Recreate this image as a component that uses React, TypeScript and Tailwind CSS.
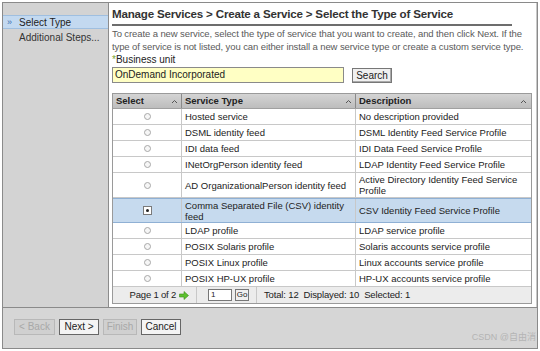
import React from "react";

const rows: { type: string; desc: string; tall?: boolean; selected?: boolean }[] = [
  { type: "Hosted service", desc: "No description provided" },
  { type: "DSML identity feed", desc: "DSML Identity Feed Service Profile" },
  { type: "IDI data feed", desc: "IDI Data Feed Service Profile" },
  { type: "INetOrgPerson identity feed", desc: "LDAP Identity Feed Service Profile" },
  { type: "AD OrganizationalPerson identity feed", desc: "Active Directory Identity Feed Service Profile", tall: true },
  { type: "Comma Separated File (CSV) identity feed", desc: "CSV Identity Feed Service Profile", tall: true, selected: true },
  { type: "LDAP profile", desc: "LDAP service profile" },
  { type: "POSIX Solaris profile", desc: "Solaris accounts service profile" },
  { type: "POSIX Linux profile", desc: "Linux accounts service profile" },
  { type: "POSIX HP-UX profile", desc: "HP-UX accounts service profile" },
];

function SortCaret() {
  return (
    <svg width="7" height="5" viewBox="0 0 7 5" className="shrink-0">
      <path d="M1 4 L3.5 1.5 L6 4" stroke="#555" strokeWidth="1" fill="none" />
    </svg>
  );
}

function Radio({ checked }: { checked?: boolean }) {
  if (checked) {
    return (
      <div className="w-[9px] h-[9px] border border-[#7a7a7a] bg-white flex items-center justify-center">
        <div className="w-[3px] h-[3px] bg-[#222] rounded-full" />
      </div>
    );
  }
  return <div className="w-[7px] h-[7px] rounded-full border border-[#a8a8a8] bg-[#f6f6f6]" />;
}

export default function App() {
  return (
    <div
      className="w-[540px] h-[351px] bg-white p-[2px] text-[#222]"
      style={{ fontFamily: '"Liberation Sans", Arial, sans-serif' }}
    >
      <div className="w-full h-full border border-[#8a8a8a] flex flex-col">
        <div className="flex h-[304px]">
          {/* Sidebar */}
          <div className="w-[106px] bg-[#d3d3d3] border-r border-[#8c8c8c] pt-[12px] text-[10px]">
            <div className="h-[14px] bg-[#c3d9f0] border-y border-[#9fbfe0] flex items-center pl-[4px]">
              <span className="text-[#3a6fb0] text-[9px] w-[12px] leading-none">»</span>
              <span className="text-[#222]">Select Type</span>
            </div>
            <div className="pl-[16px] mt-[1px] text-[#333]">Additional Steps...</div>
          </div>
          {/* Main */}
          <div className="flex-1 bg-white px-[3px] pt-[2px] border-r border-[#c8c8c8]">
            <div className="text-[11.6px] font-bold text-[#333] leading-[18px] tracking-[-0.2px]">
              Manage Services &gt; Create a Service &gt; Select the Type of Service
            </div>
            <div className="h-[2px] bg-[#6d6d6d] w-[400px] mt-[1px]" />
            <div className="text-[9.5px] text-[#5a5a5a] leading-[12.5px] mt-[2px] tracking-[-0.1px]">
              To create a new service, select the type of service that you want to create, and then click Next. If the
              type of service is not listed, you can either install a new service type or create a custom service type.
            </div>
            <div className="text-[10px] leading-[12px] mt-[1px] text-[#222]">
              <span className="text-[#7aa530]">*</span>Business unit
            </div>
            <div className="flex items-center mt-[1px]">
              <div className="w-[232px] h-[16px] bg-[#ffffc4] border border-[#8a8a8a] text-[10px] leading-[14px] pl-[2px]">
                OnDemand Incorporated
              </div>
              <div className="ml-[8px] w-[40px] h-[15px] bg-[#f0f0f0] border border-[#777] text-[10px] leading-[13px] text-center shadow-[inset_-1px_-1px_0_#aaa]">
                Search
              </div>
            </div>
            {/* Table */}
            <div className="mt-[10px] w-[420px] border border-[#9a9a9a] text-[9.5px]">
              <div className="flex h-[15px] bg-gradient-to-b from-[#d4d4d4] to-[#bdbdbd] font-bold text-[#222] border-b border-[#a0a0a0]">
                <div className="w-[69px] flex items-center justify-between pl-[3px] pr-[3px] border-r border-[#8a8a8a]">
                  <span>Select</span>
                  <SortCaret />
                </div>
                <div className="w-[174px] flex items-center justify-between pl-[3px] pr-[3px] border-r border-[#8a8a8a]">
                  <span>Service Type</span>
                  <SortCaret />
                </div>
                <div className="flex-1 flex items-center justify-between pl-[3px] pr-[4px]">
                  <span>Description</span>
                  <SortCaret />
                </div>
              </div>
              {rows.map((r, i) => (
                <div
                  key={i}
                  className={`flex ${r.tall ? "h-[25px]" : "h-[16px]"} ${
                    r.selected ? "bg-[#c6daee] border-y border-[#8fb0d4]" : "border-b border-[#c8c8c8]"
                  }`}
                >
                  <div className="w-[69px] flex items-center justify-center border-r border-[#c8c8c8]">
                    <Radio checked={r.selected} />
                  </div>
                  <div className="w-[174px] flex items-center pl-[3px] pr-[3px] leading-[11px] border-r border-[#c8c8c8]">
                    {r.type}
                  </div>
                  <div className="flex-1 flex items-center pl-[3px] pr-[3px] leading-[11px]">{r.desc}</div>
                </div>
              ))}
              <div className="flex h-[16px] bg-[#ececec] items-center text-[9.5px]">
                <div className="w-[84px] flex items-center justify-end pr-[7px] border-r border-[#c8c8c8] h-full gap-[3px]">
                  <span className="tracking-[-0.2px]">Page 1 of 2</span>
                  <svg width="10" height="9" viewBox="0 0 10 9">
                    <path d="M0.5 3 H5 V0.5 L9.5 4.5 L5 8.5 V6 H0.5 Z" fill="#5bbf2e" stroke="#3c8f1a" strokeWidth="0.6" />
                  </svg>
                </div>
                <div className="flex items-center pl-[11px] pr-[7px] border-r border-[#c8c8c8] h-full">
                  <div className="w-[24px] h-[12px] bg-white border border-[#777] text-[8px] leading-[10px] pl-[2px]">1</div>
                  <div className="ml-[3px] w-[14px] h-[12px] bg-[#f0f0f0] border border-[#777] text-[8px] leading-[10px] text-center">
                    Go
                  </div>
                </div>
                <div className="pl-[7px] whitespace-pre tracking-[-0.15px]">Total: 12  Displayed: 10  Selected: 1</div>
              </div>
            </div>
          </div>
        </div>
        {/* Bottom bar */}
        <div className="flex-1 bg-[#d6d6d6] border-t border-[#8a8a8a] relative">
          <div className="flex items-center gap-[4px] pl-[11px] pt-[11px] text-[10px]">
            <div className="w-[41px] h-[16px] border border-[#b8b8b8] bg-[#d0d0d0] text-[#a8a8a8] text-center leading-[14px]">
              &lt; Back
            </div>
            <div className="w-[40px] h-[16px] border border-[#666] bg-[#f4f4f4] text-center leading-[14px]">
              Next &gt;
            </div>
            <div className="w-[34px] h-[16px] border border-[#b8b8b8] bg-[#d0d0d0] text-[#a8a8a8] text-center leading-[14px]">
              Finish
            </div>
            <div className="w-[40px] h-[16px] border border-[#666] bg-[#f4f4f4] text-center leading-[14px]">
              Cancel
            </div>
          </div>
          <div
            className="absolute right-[1px] bottom-[4px] text-[9px] text-[#b4b4b4]"
            style={{ fontFamily: '"Liberation Sans", "Noto Sans CJK SC", sans-serif' }}
          >
            CSDN @自由消
          </div>
        </div>
      </div>
    </div>
  );
}
